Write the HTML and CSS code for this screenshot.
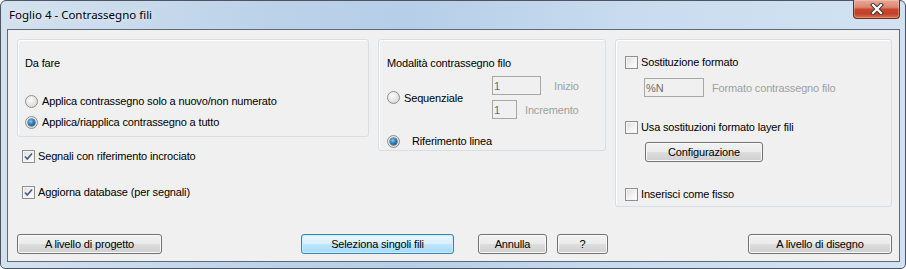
FILE: index.html
```html
<!DOCTYPE html>
<html lang="it">

<head>
    <meta charset="UTF-8" />
    <title>Foglio 4 - Contrassegno fili</title>
    <link rel="stylesheet" href="styles.css">
</head>

<body>
    <div class="window">
        <div class="titlebar">
            <span class="title">Foglio 4 - Contrassegno fili</span>
            <button class="close" type="button">
                <svg width="14" height="12" viewBox="0 0 14 12">
                    <path d="M3 2 L11 10 M11 2 L3 10" stroke="#3a3a3a" stroke-width="4.2" stroke-linecap="square" fill="none" />
                    <path d="M3 2 L11 10 M11 2 L3 10" stroke="#fff" stroke-width="2.2" stroke-linecap="square" fill="none" />
                </svg>
            </button>
        </div>

        <div class="client">
            <div class="top-row">
                <!-- colonna sinistra -->
                <div class="col-left">
                    <div class="group g-todo">
                        <div class="line caption">Da fare</div>
                        <label class="line opt todo-1"><span class="radio"></span>Applica contrassegno solo a nuovo/non numerato</label>
                        <label class="line opt todo-2"><span class="radio on"></span>Applica/riapplica contrassegno a tutto</label>
                    </div>
                    <label class="line opt chk-segnali">
                        <span class="check"><svg width="11" height="11" viewBox="0 0 11 11"><path d="M2 5.5 L4.3 8 L9 2.5" stroke="#4a5d8a" stroke-width="1.7" fill="none" /></svg></span>Segnali con riferimento incrociato
                    </label>
                    <label class="line opt chk-db">
                        <span class="check"><svg width="11" height="11" viewBox="0 0 11 11"><path d="M2 5.5 L4.3 8 L9 2.5" stroke="#4a5d8a" stroke-width="1.7" fill="none" /></svg></span>Aggiorna database (per segnali)
                    </label>
                </div>

                <!-- modalità -->
                <div class="group g-mode">
                    <div class="line caption">Modalità contrassegno filo</div>
                    <div class="seq-grid">
                        <label class="line opt seq"><span class="radio"></span>Sequenziale</label>
                        <div class="field">
                            <span class="textbox tb-start">1</span>
                            <span class="muted lbl-start">Inizio</span>
                        </div>
                        <div class="field">
                            <span class="textbox tb-step">1</span>
                            <span class="muted lbl-step">Incremento</span>
                        </div>
                    </div>
                    <label class="line opt rif"><span class="radio on"></span>Riferimento linea</label>
                </div>

                <!-- formato -->
                <div class="group g-format">
                    <label class="line opt fmt-1"><span class="check"></span>Sostituzione formato</label>
                    <div class="field fmt-field">
                        <span class="textbox tb-fmt">%N</span>
                        <span class="muted lbl-fmt">Formato contrassegno filo</span>
                    </div>
                    <label class="line opt fmt-2"><span class="check"></span>Usa sostituzioni formato layer fili</label>
                    <button class="btn btn-config" type="button">Configurazione</button>
                    <label class="line opt fmt-3"><span class="check"></span>Inserisci come fisso</label>
                </div>
            </div>

            <div class="buttons">
                <button class="btn b-progetto" type="button">A livello di progetto</button>
                <button class="btn default b-singoli" type="button">Seleziona singoli fili</button>
                <button class="btn b-annulla" type="button">Annulla</button>
                <button class="btn b-help" type="button">?</button>
                <button class="btn b-disegno" type="button">A livello di disegno</button>
            </div>
        </div>
    </div>
</body>

</html>
```

FILE: styles.css
```css
/* base */

* {
    box-sizing: border-box;
}

body {
    margin: 0;
    background: #fff;
    font-family: "Liberation Sans", Arial, sans-serif;
    font-size: 11px;
    letter-spacing: -0.15px;
    color: #000;
}

/* cornice finestra */

.window {
    width: 906px;
    height: 269px;
    border: 1px solid #4c5561;
    border-radius: 6px 6px 5px 5px;
    background: linear-gradient(to right, #d4e2ef 0%, #bcd2e9 30%, #b6cee8 45%, #c9dcef 70%, #d2e2f2 100%);
    padding: 0 5px 6px 6px;
    display: flex;
    flex-direction: column;
}

.titlebar {
    height: 28px;
    display: flex;
    justify-content: space-between;
    align-items: flex-start;
}

.title {
    font-family: "Noto Sans", "Open Sans", sans-serif;
    font-size: 11.5px;
    letter-spacing: 0;
    margin: 6px 0 0 2px;
    text-shadow: 0 0 6px rgba(255, 255, 255, 0.9);
}

.close {
    width: 47px;
    height: 19px;
    margin: -1px 0 0 0;
    padding: 0;
    border: 1px solid #6b2a1e;
    border-top: none;
    border-radius: 0 0 4px 4px;
    background: linear-gradient(#e8a898 0%, #db8770 40%, #c8472d 52%, #c43f27 75%, #d66e4f 100%);
    box-shadow: inset 0 0 0 1px rgba(255, 220, 200, 0.35);
    display: flex;
    align-items: center;
    justify-content: center;
}

.close svg {
    display: block;
}

/* area client */

.client {
    flex: 1;
    border: 1px solid #5f6a77;
    background: #f0f0f0;
    padding: 9px 0 0 9px;
}

.top-row {
    display: flex;
    align-items: flex-start;
    gap: 9px;
}

.group {
    border: 1px solid #d5dfe5;
    border-radius: 3px;
    box-shadow: inset 1px 1px 0 #fff;
}

.line {
    height: 16px;
    display: flex;
    align-items: center;
    white-space: nowrap;
}

.opt {
    cursor: default;
}

.muted {
    color: #a0a0a0;
}

/* radio e check */

.radio {
    width: 13px;
    height: 13px;
    border: 1px solid #8e8f8f;
    border-radius: 50%;
    background: radial-gradient(circle at 40% 35%, #fdfdfd 0%, #e6e6e6 50%, #cfcfcf 100%);
    margin-right: 4px;
    flex: none;
    position: relative;
}

.radio.on::after {
    content: '';
    position: absolute;
    left: 2px;
    top: 2px;
    width: 7px;
    height: 7px;
    border-radius: 50%;
    background: radial-gradient(circle at 40% 35%, #7fd2f7 0%, #2b7fb8 45%, #123f66 100%);
    box-shadow: 0 0 0 0.5px #1f3c57;
}

.check {
    width: 13px;
    height: 13px;
    border: 1px solid #8e8f8f;
    background: linear-gradient(135deg, #dcdcdc 0%, #f4f4f4 60%, #fefefe 100%);
    box-shadow: inset 0 0 0 1px #f4f4f4;
    margin-right: 3px;
    flex: none;
    display: flex;
    align-items: center;
    justify-content: center;
}

.check svg {
    display: block;
}

/* gruppo da fare */

.col-left {
    width: 352px;
}

.g-todo {
    height: 98px;
    padding: 15px 0 0 7px;
}

.todo-1 {
    margin-top: 22px;
}

.todo-2 {
    margin-top: 5px;
}

.chk-segnali {
    margin: 11px 0 0 5px;
}

.chk-db {
    margin: 20px 0 0 5px;
}

/* gruppo modalità */

.g-mode {
    width: 228px;
    height: 112px;
    padding: 15px 0 0 8px;
}

.seq-grid {
    display: grid;
    grid-template-columns: 105px auto;
    grid-template-rows: 19px 19px;
    row-gap: 5px;
    margin-top: 5px;
}

.seq {
    grid-row: 1 / 3;
    align-self: center;
}

.field {
    display: flex;
    align-items: center;
}

.textbox {
    height: 19px;
    border: 1px solid #a7a7a7;
    background: #f0f0f0;
    color: #6d6d6d;
    padding: 0 1px;
    display: flex;
    align-items: center;
}

.tb-start {
    width: 49px;
}

.tb-step {
    width: 25px;
}

.lbl-start {
    margin-left: 13px;
}

.lbl-step {
    margin-left: 8px;
}

.rif {
    margin-top: 14px;
}

.rif .radio {
    margin-right: 12px;
}

/* gruppo formato */

.g-format {
    width: 277px;
    height: 168px;
    padding: 14px 0 0 9px;
}

.fmt-field {
    margin: 8px 0 0 19px;
}

.tb-fmt {
    width: 60px;
}

.lbl-fmt {
    margin-left: 8px;
}

.fmt-2 {
    margin-top: 22px;
}

.btn-config {
    width: 118px;
    margin: 7px 0 0 20px;
}

.fmt-3 {
    margin-top: 24px;
}

/* pulsanti */

.btn {
    display: block;
    height: 20px;
    padding: 0;
    border: 1px solid #707070;
    border-radius: 3px;
    background: linear-gradient(#f2f2f2 0%, #ebebeb 48%, #dddddd 52%, #cfcfcf 100%);
    box-shadow: inset 0 0 0 1px #fbfbfb;
    font-family: "Liberation Sans", Arial, sans-serif;
    font-size: 11px;
    letter-spacing: -0.15px;
    color: #000;
}

.btn.default {
    border-color: #3c7fb1;
    background: linear-gradient(#eaf6fd 0%, #d9f0fc 48%, #bee6fd 52%, #a7d9f5 100%);
    box-shadow: inset 0 0 0 1px #c4f0ff;
}

.buttons {
    display: flex;
    margin-top: 27px;
}

.b-progetto {
    width: 145px;
}

.b-singoli {
    width: 153px;
    margin-left: 139px;
}

.b-annulla {
    width: 69px;
    margin-left: 24px;
}

.b-help {
    width: 51px;
    margin-left: 10px;
}

.b-disegno {
    width: 144px;
    margin-left: 140px;
}
```
